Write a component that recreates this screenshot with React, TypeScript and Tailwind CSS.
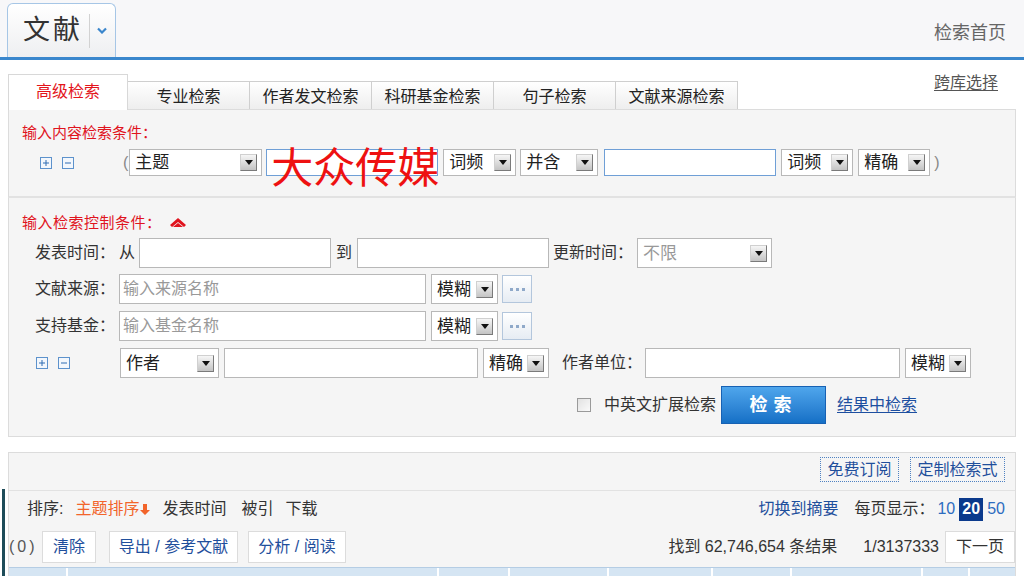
import React from 'react';

const Arrow = () => (
  <span className="flex h-[17px] w-[17px] shrink-0 items-center justify-center border border-t-[#d0d0d0] border-l-[#d0d0d0] border-r-[#7a7a7a] border-b-[#7a7a7a] bg-linear-to-b from-[#f6f6f6] to-[#c4c4c4]">
    <svg width="8" height="5" viewBox="0 0 8 5">
      <path d="M0 0h8L4 5z" fill="#111" />
    </svg>
  </span>
);

const Select = ({ text, className = '', muted = false, h = 'h-[27px]' }: { text: string; className?: string; muted?: boolean; h?: string }) => (
  <div className={`flex shrink-0 items-center justify-between border border-[#b8b8b8] bg-white pl-[5px] pr-[4px] ${h} ${className}`}>
    <span className={`text-[17px] leading-none ${muted ? 'text-[#999]' : 'text-[#222]'}`}>{text}</span>
    <Arrow />
  </div>
);

const Input = ({ className = '', placeholder = '', blue = false }: { className?: string; placeholder?: string; blue?: boolean }) => (
  <div
    className={`flex shrink-0 items-center bg-white pl-[3px] text-[16px] text-[#999] ${blue ? 'border border-[#6f9fd6]' : 'border border-[#b8b8b8]'} ${className}`}
  >
    {placeholder}
  </div>
);

const Plus = ({ className = '' }: { className?: string }) => (
  <svg width="12" height="12" viewBox="0 0 12 12" className={`shrink-0 ${className}`}>
    <rect x=".5" y=".5" width="11" height="11" fill="#f3f7fc" stroke="#5d92cc" />
    <path d="M3 6h6M6 3v6" stroke="#2f6cb3" />
  </svg>
);

const Minus = ({ className = '' }: { className?: string }) => (
  <svg width="12" height="12" viewBox="0 0 12 12" className={`shrink-0 ${className}`}>
    <rect x=".5" y=".5" width="11" height="11" fill="#f3f7fc" stroke="#5d92cc" />
    <path d="M3 6h6" stroke="#2f6cb3" />
  </svg>
);

const Dots = () => (
  <div className="ml-[4px] flex h-[28px] w-[30px] shrink-0 items-center justify-center gap-[3px] border border-[#b3c6dc] bg-linear-to-b from-white to-[#e6ecf3]">
    <span className="h-[3px] w-[3px] bg-[#8fa9c9]" />
    <span className="h-[3px] w-[3px] bg-[#8fa9c9]" />
    <span className="h-[3px] w-[3px] bg-[#8fa9c9]" />
  </div>
);

const tabs = ['专业检索', '作者发文检索', '科研基金检索', '句子检索', '文献来源检索'];
const cols = ['w-[57px]', 'w-[369px]', 'w-[69px]', 'w-[97px]', 'w-[102px]', 'w-[77px]', 'w-[129px]', 'w-[45px]', 'flex-1'];

export default function App() {
  return (
    <div className="h-[576px] w-[1024px] overflow-hidden bg-white font-['Liberation_Sans','Noto_Sans_CJK_SC',sans-serif] text-[16px] text-[#333]">
      {/* Header */}
      <div className="flex h-[57px] items-end justify-between bg-[#f7f7f9] pl-[7px] pr-[18px]">
        <div className="flex h-[54px] w-[109px] items-center rounded-t-[6px] border border-b-0 border-[#a6c6e6] bg-linear-to-b from-white to-[#eeeff1]">
          <span className="ml-[15px] text-[27px] leading-none tracking-[3px] text-[#333]">文献</span>
          <span className="ml-[6px] h-[34px] w-px bg-[#d2d2d2]" />
          <svg width="10" height="7" viewBox="0 0 10 7" className="ml-[7px]">
            <path d="M1 1.5l4 4 4-4" stroke="#3a86cc" strokeWidth="2.2" fill="none" />
          </svg>
        </div>
        <span className="mb-[14px] text-[18px] leading-[20px] text-[#666]">检索首页</span>
      </div>
      <div className="h-[3px] bg-[#3a87cd]" />

      {/* Tabs */}
      <div className="mx-2 mt-[11px] flex items-end justify-between">
        <div className="flex items-end">
          <div className="relative z-10 -mb-px flex h-[36px] w-[120px] items-center justify-center border border-b-0 border-[#d8d8d8] bg-white pb-[2px] text-[#e3141b]">
            高级检索
          </div>
          {tabs.map((t) => (
            <div
              key={t}
              className="-ml-px flex h-[28px] w-[123px] items-center justify-center border border-b-0 border-[#cfcfcf] bg-linear-to-b from-white to-[#eeeeee] pt-[3px] text-[#222]"
            >
              {t}
            </div>
          ))}
        </div>
        <span className="mb-[14px] mr-[18px] self-end text-[#555] underline underline-offset-2">跨库选择</span>
      </div>

      {/* Content condition panel */}
      <div className="mx-2 h-[89px] border border-b-2 border-[#dcdcdc] border-b-[#e2e2e2] bg-[#f5f5f5] pl-[13px] pt-[14px]">
        <div className="text-[15px] leading-[18px] text-[#e0141e]">输入内容检索条件：</div>
        <div className="mt-[7px] flex items-center">
          <Plus className="ml-[18px]" />
          <Minus className="ml-[10px]" />
          <span className="ml-[49px] text-[#888]">(</span>
          <Select text="主题" className="ml-[1px] w-[133px]" />
          <div className="relative ml-[4px]">
            <Input blue className="h-[27px] w-[172px]" />
            <span className="absolute left-[5px] top-[-1px] whitespace-nowrap text-[42px] leading-[42px] text-[#ee1111]">大众传媒</span>
          </div>
          <Select text="词频" className="ml-[5px] w-[73px]" />
          <Select text="并含" className="ml-[4px] w-[78px]" />
          <Input blue className="ml-[6px] h-[27px] w-[172px]" />
          <Select text="词频" className="ml-[5px] w-[72px]" />
          <Select text="精确" className="ml-[5px] w-[72px]" />
          <span className="ml-[4px] text-[#888]">)</span>
        </div>
      </div>

      {/* Control condition panel */}
      <div className="mx-2 h-[239px] border border-t-0 border-[#dcdcdc] bg-[#f5f5f5] pl-[13px] pt-[16px]">
        <div className="flex items-center text-[15px] leading-[18px] text-[#e0141e]">
          <span className="tracking-[0.5px]">输入检索控制条件：</span>
          <svg width="16" height="10" viewBox="0 0 16 10" className="ml-[8px]">
            <path d="M8 0l8 7-2 2-6-5-6 5-2-2z" fill="#e0141e" />
            <path d="M8 5l5 4H3z" fill="#e0141e" />
          </svg>
        </div>

        <div className="mt-[6px] flex h-[30px] items-center">
          <span className="ml-[13px]">发表时间：</span>
          <span className="ml-[4px]">从</span>
          <Input className="ml-[4px] h-[30px] w-[192px]" />
          <span className="ml-[5px]">到</span>
          <Input className="ml-[5px] h-[30px] w-[192px]" />
          <span className="ml-[4px]">更新时间：</span>
          <Select text="不限" muted h="h-[30px]" className="ml-[4px] w-[135px]" />
        </div>

        <div className="mt-[6px] flex h-[30px] items-center">
          <span className="ml-[13px]">文献来源：</span>
          <Input placeholder="输入来源名称" className="ml-[4px] h-[30px] w-[307px]" />
          <Select text="模糊" h="h-[30px]" className="ml-[5px] w-[67px]" />
          <Dots />
        </div>

        <div className="mt-[7px] flex h-[30px] items-center">
          <span className="ml-[13px]">支持基金：</span>
          <Input placeholder="输入基金名称" className="ml-[4px] h-[30px] w-[307px]" />
          <Select text="模糊" h="h-[30px]" className="ml-[5px] w-[67px]" />
          <Dots />
        </div>

        <div className="mt-[7px] flex h-[30px] items-center">
          <Plus className="ml-[14px]" />
          <Minus className="ml-[10px]" />
          <Select text="作者" h="h-[30px]" className="ml-[50px] w-[99px]" />
          <Input className="ml-[5px] h-[30px] w-[254px]" />
          <Select text="精确" h="h-[30px]" className="ml-[5px] w-[66px]" />
          <span className="ml-[13px]">作者单位：</span>
          <Input className="ml-[3px] h-[30px] w-[255px]" />
          <Select text="模糊" h="h-[30px]" className="ml-[5px] w-[66px]" />
        </div>

        <div className="mt-[8px] flex h-[38px] items-center">
          <span className="ml-[555px] h-[14px] w-[14px] border border-[#9a9a9a] bg-linear-to-br from-[#e2e2e2] to-[#fafafa]" />
          <span className="ml-[13px]">中英文扩展检索</span>
          <button className="ml-[5px] h-[38px] w-[105px] border border-[#1761b3] bg-linear-to-b from-[#4fa6ec] to-[#1470c6] text-[18px] font-semibold tracking-[6px] text-white">
            检索
          </button>
          <span className="ml-[11px] text-[#1d4fa0] underline underline-offset-2">结果中检索</span>
        </div>
      </div>

      {/* Results panel */}
      <div className="mt-[15px] flex h-[200px]">
        <div className="ml-[2px] mt-[37px] w-[3px] bg-[#1e4c59]" />
        <div className="ml-[3px] mr-2 flex-1 border border-[#dcdcdc] bg-[#f5f5f5]">
          <div className="flex h-[38px] items-start justify-end border-b border-[#e2e2e2] pr-[10px] pt-[4px]">
            <span className="flex h-[25px] w-[79px] items-center justify-center border border-dotted border-[#4f82c2] text-[#1f4f9c]">免费订阅</span>
            <span className="ml-[11px] flex h-[25px] w-[95px] items-center justify-center border border-dotted border-[#4f82c2] text-[#1f4f9c]">定制检索式</span>
          </div>

          <div className="flex h-[36px] items-center justify-between pl-[18px] pr-[10px]">
            <div className="flex items-center">
              <span>排序:</span>
              <span className="ml-[12px] flex items-center text-[#f2642a]">
                主题排序
                <svg width="10" height="11" viewBox="0 0 10 11" className="ml-[1px]">
                  <path d="M3 0h4v6h3l-5 5-5-5h3z" fill="#f2642a" />
                </svg>
              </span>
              <span className="ml-[12px]">发表时间</span>
              <span className="ml-[15px]">被引</span>
              <span className="ml-[12px]">下载</span>
            </div>
            <div className="flex items-center">
              <span className="text-[#1f4f9c]">切换到摘要</span>
              <span className="ml-[16px]">每页显示：</span>
              <span className="ml-[3px] text-[#2d6cc0]">10</span>
              <span className="ml-[4px] flex h-[23px] w-[24px] items-center justify-center bg-[#0b3a8c] font-bold text-white">20</span>
              <span className="ml-[4px] text-[#2d6cc0]">50</span>
            </div>
          </div>

          <div className="mt-[4px] flex h-[32px] items-center justify-between">
            <div className="flex h-full items-center">
              <span className="w-[32px] tracking-[3px] text-[#555]">(0)</span>
              <span className="ml-[1px] flex h-full w-[54px] items-center justify-center border border-[#dcdcdc] bg-white text-[#1f4f9c]">清除</span>
              <span className="ml-[13px] flex h-full w-[129px] items-center justify-center border border-[#dcdcdc] bg-white text-[#1f4f9c]">导出 / 参考文献</span>
              <span className="ml-[10px] flex h-full w-[98px] items-center justify-center border border-[#dcdcdc] bg-white text-[#1f4f9c]">分析 / 阅读</span>
            </div>
            <div className="flex h-full items-center">
              <span>找到 62,746,654 条结果</span>
              <span className="ml-[26px]">1/3137333</span>
              <span className="ml-[6px] flex h-full w-[70px] items-center justify-center border border-[#dcdcdc] bg-white">下一页</span>
            </div>
          </div>

          <div className="mt-[4px] flex h-[30px] gap-[2px] border-t border-[#b5cde4] bg-white">
            {cols.map((c, i) => (
              <div key={i} className={`${c} bg-[#d5e5f3]`} />
            ))}
          </div>
        </div>
      </div>
    </div>
  );
}
